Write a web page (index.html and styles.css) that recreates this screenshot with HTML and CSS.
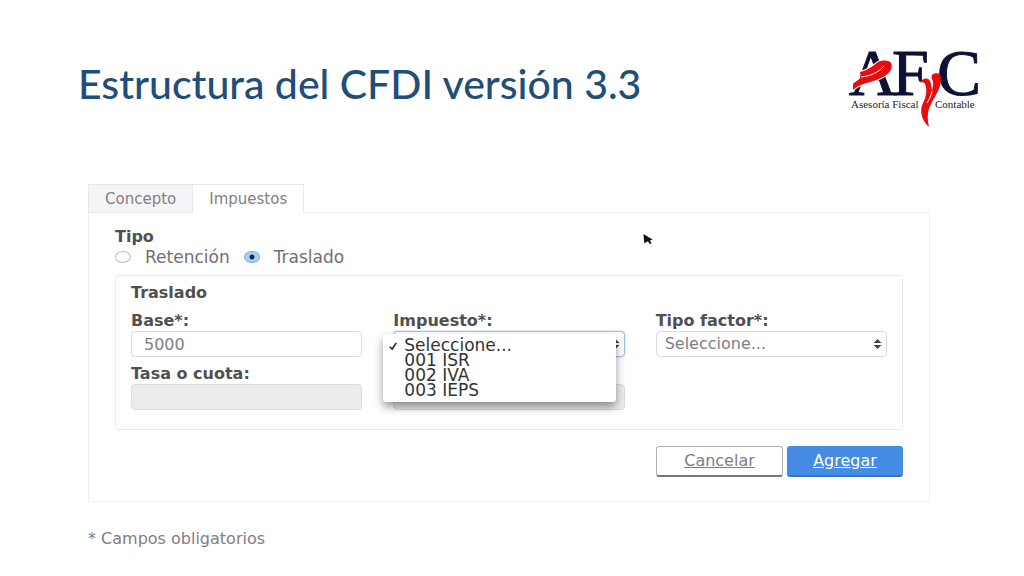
FILE: index.html
```html
<!DOCTYPE html>
<html lang="es">
<head>
<meta charset="utf-8">
<meta name="viewport" content="width=device-width, initial-scale=1">
<title>Estructura del CFDI versión 3.3</title>
<link rel="stylesheet" href="styles.css">
</head>
<body>
<header class="header">
  <h1 class="title">Estructura del CFDI versión 3.3</h1>
  <svg class="logo" viewBox="0 0 132 88" role="img" aria-label="AFyC Asesoría Fiscal y Contable">
    <g class="logo-letters">
      <text x="1" y="55">A</text>
      <text x="44" y="55">F</text>
      <text x="89" y="55">C</text>
    </g>
    <g class="logo-tagline">
      <text x="3" y="68">Asesoría Fiscal</text>
      <text x="87" y="68">Contable</text>
    </g>
    <path class="logo-halo" d="M12 32C20 30 25 26 30 22C35 20 41 20 43 23C46 29 40 35 33 38C23 43 12 43 5 50L5 44C8 40 14 41 12 32Z"/>
    <path class="logo-red" d="M12 32C20 30 25 26 30 22C35 20 41 20 43 23C46 29 40 35 33 38C23 43 12 43 5 50L5 44C8 40 14 41 12 32Z"/>
    <path class="logo-line" d="M13 37C22 36 30 33 36 26"/>
    <path class="logo-red" d="M72 43C75 37 82 37 83 44C83 47 84 49 84 51C85 46 86 43 84 39C82 34 87 32 92 34C95 43 90 52 85 60C81 68 78 73 81 87C74 81 71 71 75 63C79 56 79 48 77 44C76 42 74 42 72 43Z"/>
    <path class="logo-line" d="M84 51C83 56 81 60 79 63"/>
  </svg>
</header>

<main class="content">
  <nav class="tabs" aria-label="Secciones">
    <button class="tab" type="button">Concepto</button>
    <button class="tab tab-active" type="button">Impuestos</button>
  </nav>
  <form class="panel">
    <div class="heading" id="tipo">Tipo</div>
    <div class="radios" role="radiogroup" aria-labelledby="tipo">
      <input class="radio" type="radio" name="tipo" id="retencion"><label class="radio-label" for="retencion">Retención</label>
      <input class="radio" type="radio" name="tipo" id="traslado" checked><label class="radio-label" for="traslado">Traslado</label>
    </div>
    <section class="box">
      <h2 class="heading">Traslado</h2>
      <div class="grid">
        <div class="field">
          <label class="label" for="base">Base*:</label>
          <input class="control" id="base" type="text" value="5000">
        </div>
        <div class="field">
          <label class="label" for="impuesto">Impuesto*:</label>
          <div class="select-wrap">
            <select class="control control-focus" id="impuesto"><option></option></select>
            <svg class="arrows" viewBox="0 0 8 10" aria-hidden="true"><path d="M0 4L4 0L8 4ZM0 6L4 10L8 6Z"/></svg>
            <ul class="menu">
              <li class="option"><svg class="check" viewBox="0 0 10 10" aria-hidden="true"><path d="M1 6L4 9L9 1"/></svg>Seleccione...</li>
              <li class="option">001 ISR</li>
              <li class="option">002 IVA</li>
              <li class="option">003 IEPS</li>
            </ul>
          </div>
        </div>
        <div class="field">
          <label class="label" for="factor">Tipo factor*:</label>
          <div class="select-wrap">
            <select class="control control-select" id="factor"><option>Seleccione...</option></select>
            <svg class="arrows" viewBox="0 0 8 10" aria-hidden="true"><path d="M0 4L4 0L8 4ZM0 6L4 10L8 6Z"/></svg>
          </div>
        </div>
        <div class="field">
          <label class="label" for="tasa">Tasa o cuota:</label>
          <input class="control" id="tasa" type="text" disabled>
        </div>
        <div class="field field-end">
          <input class="control" type="text" aria-label="Importe" disabled>
        </div>
      </div>
    </section>
    <div class="actions">
      <button class="button" type="button">Cancelar</button>
      <button class="button button-primary" type="button">Agregar</button>
    </div>
  </form>
  <p class="note">* Campos obligatorios</p>
</main>
<svg class="cursor" viewBox="0 0 10 12" aria-hidden="true"><path d="M0 0L10 6L7 7L9 10L7 11L5 8L1 10Z"/></svg>
</body>
</html>
```
FILE: styles.css
```css
* { box-sizing: border-box; }
body {
  margin: 0;
  background: #fff;
  color: #808080;
  font: 16px/20px "DejaVu Sans", sans-serif;
}
.header {
  display: flex;
  justify-content: space-between;
  align-items: flex-start;
  padding: 40px 44px 0 78px;
}
.title {
  margin: 16px 0 0;
  color: #1f4e79;
  font: 500 41px/56px Lato, sans-serif;
}
.logo { width: 132px; height: 88px; flex: none; overflow: visible; }
.logo-letters { font: 66px "Liberation Serif", serif; fill: #0c1233; stroke: #0c1233; stroke-width: 1; }
.logo-tagline { font: 11px "Liberation Serif", serif; fill: #222; }
.logo-red { fill: #e80c0c; }
.logo-halo { fill: #fff; stroke: #fff; stroke-width: 2; }
.logo-line { fill: none; stroke: #fff; stroke-width: 1; }

.content { padding: 56px 94px 0 88px; }
.tabs { display: flex; }
.tab {
  height: 29px;
  padding: 0 16px;
  border: 1px solid #e8e8ec;
  background: #f5f5f7;
  color: #808080;
  font: inherit;
  font-size: 15px;
}
.tab-active {
  position: relative;
  z-index: 1;
  border-left: 0;
  border-bottom-color: #fff;
  background: #fff;
}
.panel {
  margin-top: -1px;
  padding: 14px 26px 24px;
  border: 1px solid #f0f0f0;
}
.heading { margin: 0; color: #505050; font-size: 16px; line-height: 20px; font-weight: 700; }
.radios { display: flex; align-items: center; height: 20px; }
.radio {
  appearance: none;
  width: 16px;
  height: 12px;
  margin: 0;
  border: 1px solid #b8b8b8;
  border-radius: 50%;
  background: #fff;
}
.radio:checked {
  border-color: #78a8dc;
  background: radial-gradient(circle, #102850 0 2px, #a8d0f8 3px);
}
.radio-label { margin: 0 14px; color: #707070; font-size: 17px; }
.box {
  margin-top: 8px;
  padding: 7px 15px 19px;
  border: 1px solid #ececec;
  border-radius: 3px;
}
.grid {
  display: grid;
  grid-template-columns: repeat(3, 1fr);
  gap: 7px 31px;
  margin-top: 8px;
}
.field { display: flex; flex-direction: column; }
.field-end { justify-content: flex-end; }
.label { color: #505050; font-size: 16px; font-weight: 700; line-height: 20px; }
.control {
  display: block;
  width: 100%;
  height: 26px;
  padding: 0 12px;
  border: 1px solid #dcdcdc;
  border-radius: 4px;
  background: #fff;
  color: #808080;
  font: inherit;
  appearance: none;
}
.control:disabled { background: #ececee; }
.control-select { padding: 0 8px; }
.control-focus { border-color: #9cc4ee; box-shadow: 0 0 2px #9cc4ee; }
.select-wrap { position: relative; }
.arrows { position: absolute; right: 5px; top: 8px; width: 9px; height: 10px; fill: #444; }
.menu {
  position: absolute;
  z-index: 2;
  top: 3px;
  left: -10px;
  right: 9px;
  margin: 0;
  padding: 4px 0;
  list-style: none;
  border-radius: 3px;
  background: #fff;
  box-shadow: 0 5px 10px rgba(0, 0, 0, .4);
  color: #333;
  font: 17px/15px "DejaVu Sans", sans-serif;
}
.option { position: relative; padding-left: 21px; }
.check { position: absolute; left: 6px; top: 4px; width: 8px; height: 8px; fill: none; stroke: #222; stroke-width: 2; }
.actions { display: flex; justify-content: flex-end; gap: 4px; margin-top: 16px; }
.button {
  width: 127px;
  height: 31px;
  border: 1px solid #b0b0b0;
  border-bottom: 2px solid #777;
  border-radius: 3px;
  background: #fff;
  color: #808080;
  font: inherit;
  text-decoration: underline;
}
.button-primary { width: 116px; border-color: #468be4; border-bottom-color: #3a76c8; background: #468be4; color: #fff; }
.note { margin: 27px 0 0; }
.cursor { position: absolute; left: 643px; top: 234px; width: 10px; height: 11px; fill: #111; }
```
